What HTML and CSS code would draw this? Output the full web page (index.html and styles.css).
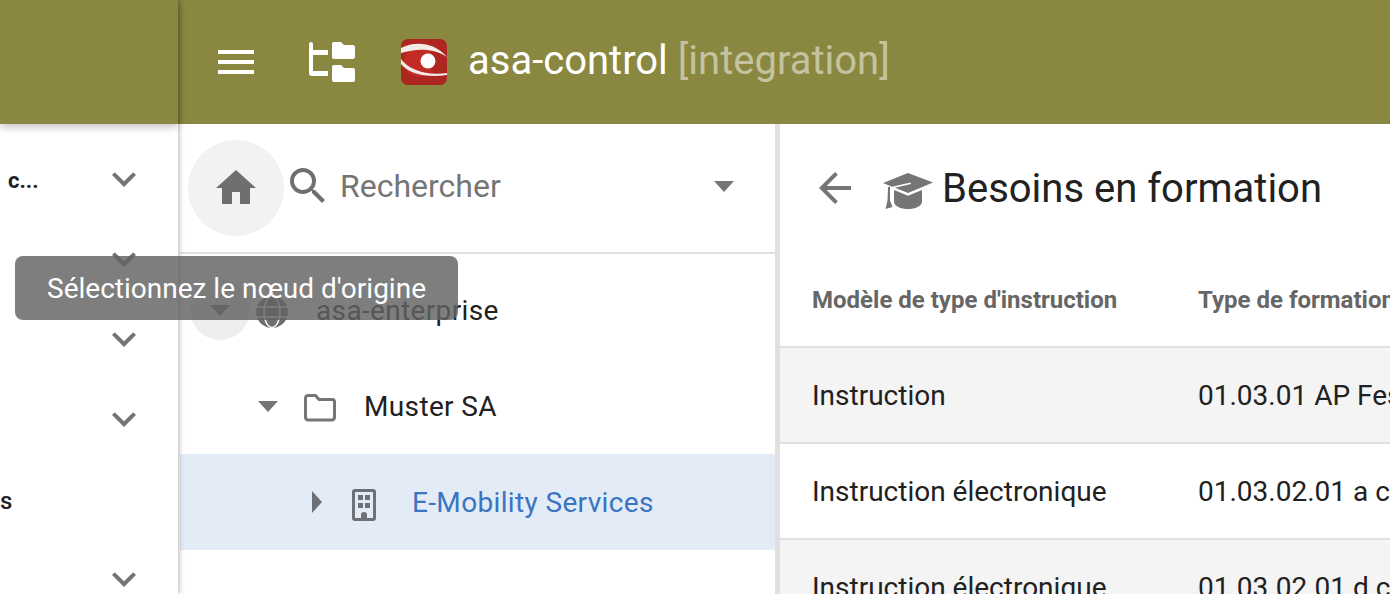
FILE: index.html
```html
<!DOCTYPE html>
<html lang="fr">
<head>
<meta charset="utf-8">
<title>asa-control</title>
<link rel="stylesheet" href="styles.css">
</head>
<body>
<div class="app">
  <aside class="sidebar">
    <div class="sidebar-head"></div>
    <div class="side-row"><span class="side-label">c...</span><svg class="chev" viewBox="0 0 24 24"><path d="M16.59 8.59L12 13.17 7.41 8.59 6 10l6 6 6-6z"/></svg></div>
    <div class="side-row"><svg class="chev" viewBox="0 0 24 24"><path d="M16.59 8.59L12 13.17 7.41 8.59 6 10l6 6 6-6z"/></svg></div>
    <div class="side-row"><svg class="chev" viewBox="0 0 24 24"><path d="M16.59 8.59L12 13.17 7.41 8.59 6 10l6 6 6-6z"/></svg></div>
    <div class="side-row"><svg class="chev" viewBox="0 0 24 24"><path d="M16.59 8.59L12 13.17 7.41 8.59 6 10l6 6 6-6z"/></svg></div>
    <div class="side-row"><span class="side-label side-label-s">s</span></div>
    <div class="side-row"><svg class="chev" viewBox="0 0 24 24"><path d="M16.59 8.59L12 13.17 7.41 8.59 6 10l6 6 6-6z"/></svg></div>
  </aside>

  <div class="main">
    <header class="topbar">
      <svg class="menu" viewBox="0 0 36 24"><path d="M0 0h36v4H0zM0 10h36v4H0zM0 20h36v4H0z"/></svg>
      <svg class="tree-icon" viewBox="0 0 46 40">
        <path d="M0 2a2 2 0 0 1 4 0v6h15v5H4v16h15v5H3a3 3 0 0 1-3-3z"/>
        <path d="M23 2a2 2 0 0 1 2-2h7l3 3h9a2 2 0 0 1 2 2v10a2 2 0 0 1-2 2H25a2 2 0 0 1-2-2z"/>
        <path d="M23 25a2 2 0 0 1 2-2h7l3 3h9a2 2 0 0 1 2 2v10a2 2 0 0 1-2 2H25a2 2 0 0 1-2-2z"/>
      </svg>
      <svg class="logo" viewBox="0 0 46 46">
        <rect width="46" height="46" rx="7" fill="#ad2620"/>
        <circle cx="18" cy="23" r="15" fill="#c93029" opacity=".7"/>
        <path d="M0 9C14 2 33 3 46 18 33 9 16 9 0 14z" fill="#f4ebe6"/>
        <path d="M0 20C8 31 26 37 46 34v2C26 39 8 35 0 25z" fill="#f4ebe6"/>
        <circle cx="27" cy="22" r="7.500" fill="#fff"/>
      </svg>
      <h1 class="app-title">asa-control <span class="env">[integration]</span></h1>
    </header>

    <div class="panes">
      <section class="tree-pane">
        <div class="search-bar">
          <div class="home-btn"><svg class="i48" viewBox="0 0 24 24"><path d="M10 20v-6h4v6h5v-8h3L12 3 2 12h3v8z"/></svg></div>
          <svg class="i48 search-icon" viewBox="0 0 24 24"><path d="M15.5 14h-.79l-.28-.27A6.471 6.471 0 0 0 16 9.5 6.5 6.5 0 1 0 9.5 16c1.61 0 3.09-.59 4.23-1.57l.27.28v.79l5 4.99L20.49 19l-4.99-5zm-6 0C7.01 14 5 11.99 5 9.5S7.01 5 9.5 5 14 7.01 14 9.5 11.99 14 9.5 14z"/></svg>
          <span class="search-text">Rechercher</span>
          <span class="caret-down caret-search"></span>
        </div>
        <div class="tree-list">
          <div class="tree-row">
            <div class="toggle-circle"><span class="caret-down"></span></div>
            <svg class="globe" viewBox="0 0 32 32">
              <circle cx="16" cy="16" r="16"/>
              <ellipse cx="16" cy="16" rx="8" ry="15.500"/>
              <path d="M0 11h32M0 21h32"/>
            </svg>
            <span class="node-label node-root">asa-enterprise</span>
          </div>
          <div class="tree-row tree-row-l1">
            <span class="caret-down"></span>
            <svg class="folder" viewBox="0 0 32 28"><path d="M1.500 4a2.500 2.500 0 0 1 2.500-2.500h7.500l3.500 4h13a2.500 2.500 0 0 1 2.500 2.500v15.500a2.500 2.500 0 0 1-2.500 2.500H4a2.500 2.500 0 0 1-2.500-2.500z"/></svg>
            <span class="node-label">Muster SA</span>
          </div>
          <div class="tree-row tree-row-l2 is-selected">
            <span class="caret-right"></span>
            <svg class="building" viewBox="0 0 24 32">
              <path fill-rule="evenodd" d="M3 0h18a3 3 0 0 1 3 3v26a3 3 0 0 1-3 3H3a3 3 0 0 1-3-3V3a3 3 0 0 1 3-3zm0 3v26h6v-3a3 3 0 0 1 6 0v3h6V3z"/>
              <path d="M6 6h5v5H6zM13 6h5v5h-5zM6 14h5v5H6zM13 14h5v5h-5z"/>
            </svg>
            <span class="node-label node-selected">E-Mobility Services</span>
          </div>
        </div>
      </section>

      <section class="content">
        <div class="content-head">
          <svg class="back" viewBox="0 0 24 24"><path d="M20 11H7.830l5.590-5.590L12 4l-8 8 8 8 1.410-1.410L7.830 13H20v-2z"/></svg>
          <svg class="cap" viewBox="0 0 50 38" preserveAspectRatio="none">
            <path d="M25 0L50 10 25 21 12 15.500 28 11.500 27.500 10 9 14.500 0 10.500z"/>
            <path d="M11 18v12c0 5 7 8 14 8s14-3 14-8V18L25 24z"/>
            <path d="M5 15l2-.8V29l2.500 7-7 2L4.500 29z"/>
          </svg>
          <h2 class="page-title">Besoins en formation</h2>
        </div>
        <div class="grid-row grid-head"><span>Modèle de type d'instruction</span><span>Type de formation</span></div>
        <div class="grid-row grid-alt"><span>Instruction</span><span>01.03.01 AP Fest</span></div>
        <div class="grid-row"><span>Instruction électronique</span><span>01.03.02.01 a cours</span></div>
        <div class="grid-row grid-alt"><span>Instruction électronique</span><span>01.03.02.01 d cours</span></div>
      </section>
    </div>
  </div>
</div>
<div class="tooltip">Sélectionnez le nœud d'origine</div>
</body>
</html>
```
FILE: styles.css
```css
* { box-sizing: border-box; }
html, body { margin: 0; height: 594px; overflow: hidden; background: #fff; }
body { font-family: Roboto, "Liberation Sans", sans-serif; color: #212121; }

.app { display: flex; height: 594px; overflow: hidden; }

/* left navigation */
.sidebar { position: relative; z-index: 2; flex: 0 0 178px; margin-right: 2px; background: #fff; box-shadow: 1px 0 5px rgba(0,0,0,.3); }
.sidebar-head { height: 124px; margin-bottom: 15px; background: #8a8740; box-shadow: 0 3px 8px rgba(0,0,0,.24); }
.side-row { display: flex; align-items: center; justify-content: flex-end; height: 80px; padding-right: 30px; position: relative; }
.side-label { position: absolute; left: 8px; top: 29px; font-size: 22px; font-weight: 700; line-height: 26px; }
.side-label-s { left: 0; top: 29px; font-size: 24px; font-weight: 500; }
.chev { width: 48px; height: 48px; fill: #757575; }

/* main */
.main { flex: 1; min-width: 0; display: flex; flex-direction: column; }
.topbar { height: 124px; flex: none; margin-left: -2px; background: #8a8740; display: flex; align-items: center; padding-left: 40px; }
.menu { width: 36px; height: 24px; fill: #fff; flex: none; }
.tree-icon { width: 46px; height: 40px; margin-left: 55px; fill: #fff; flex: none; }
.logo { width: 46px; height: 46px; margin-left: 46px; flex: none; }
.app-title { margin: 0 0 3px 21px; font-size: 40px; font-weight: 400; color: #fff; line-height: 44px; white-space: nowrap; }
.env { color: rgba(255,255,255,.5); }

.panes { flex: 1; display: flex; min-height: 0; }
.tree-pane { flex: 0 0 600px; border-right: 5px solid #e0e0e0; }

.search-bar { height: 130px; border-bottom: 2px solid #e0e0e0; display: flex; align-items: flex-start; padding: 16px 0 0 8px; position: relative; }
.home-btn { width: 96px; height: 96px; border-radius: 50%; background: #f2f2f2; display: flex; align-items: center; justify-content: center; flex: none; }
.i48 { width: 48px; height: 48px; fill: #6f6f6f; flex: none; }
.search-icon { margin: 22px 0 0 0; }
.search-text { margin: 26px 0 0 8px; font-size: 32px; line-height: 40px; color: #757575; }

.caret-down { display: block; width: 0; height: 0; border-left: 10.500px solid transparent; border-right: 10.500px solid transparent; border-top: 11px solid #757575; flex: none; }
.caret-right { display: block; width: 0; height: 0; border-top: 11px solid transparent; border-bottom: 11px solid transparent; border-left: 10px solid #6d7177; flex: none; }
.caret-search { position: absolute; left: 534px; top: 57px; }

.tree-list { padding-top: 8px; }
.tree-row { height: 96px; display: flex; align-items: center; }
.toggle-circle { width: 60px; height: 60px; margin-left: 10px; border-radius: 50%; background: #eee; display: flex; align-items: center; justify-content: center; flex: none; }
.globe { width: 32px; height: 32px; margin: 4px 0 0 6px; flex: none; fill: #6f6f6f; }
.globe ellipse, .globe path { fill: none; stroke: #fff; stroke-width: 1.500; }
.node-label { margin-top: 2px; font-size: 28px; line-height: 36px; letter-spacing: .35px; white-space: nowrap; }
.node-root { margin-left: 28px; }
.tree-row-l1 { padding-left: 78px; }
.folder { width: 32px; height: 28px; margin: 4px 0 0 26px; fill: none; stroke: #757575; stroke-width: 3px; flex: none; }
.tree-row-l1 .node-label { margin-left: 28px; }
.tree-row-l2 { padding-left: 132px; }
.is-selected { background: #e3ebf7; }
.building { width: 24px; height: 32px; margin: 6px 0 0 30px; fill: #6d7177; flex: none; }
.node-selected { margin-left: 36px; color: #3a74c2; }

/* content */
.content { flex: 1; min-width: 0; overflow: hidden; }
.content-head { height: 131px; display: flex; align-items: center; padding-left: 32px; }
.back { width: 48px; height: 48px; margin: 0 0 3px -1px; fill: #757575; flex: none; }
.cap { width: 50px; height: 36px; margin: 2px 0 0 24px; fill: #757575; flex: none; }
.page-title { margin: 0 0 2px 9px; font-size: 40px; font-weight: 400; line-height: 48px; white-space: nowrap; }

.grid-row { display: grid; grid-template-columns: 386px 1fr; height: 96px; padding-left: 32px; align-items: center; border-bottom: 2px solid #e0e0e0; font-size: 28px; white-space: nowrap; }
.grid-head { height: 93px; font-size: 24px; font-weight: 700; color: #666; padding-bottom: 1px; }
.grid-alt { background: #f4f4f4; }

/* tooltip */
.tooltip { position: absolute; left: 15px; top: 256px; z-index: 5; width: 443px; height: 64px; border-radius: 8px; background: rgba(97,97,97,.82); color: #fff; font-size: 28px; line-height: 65px; text-align: center; white-space: nowrap; }
```
